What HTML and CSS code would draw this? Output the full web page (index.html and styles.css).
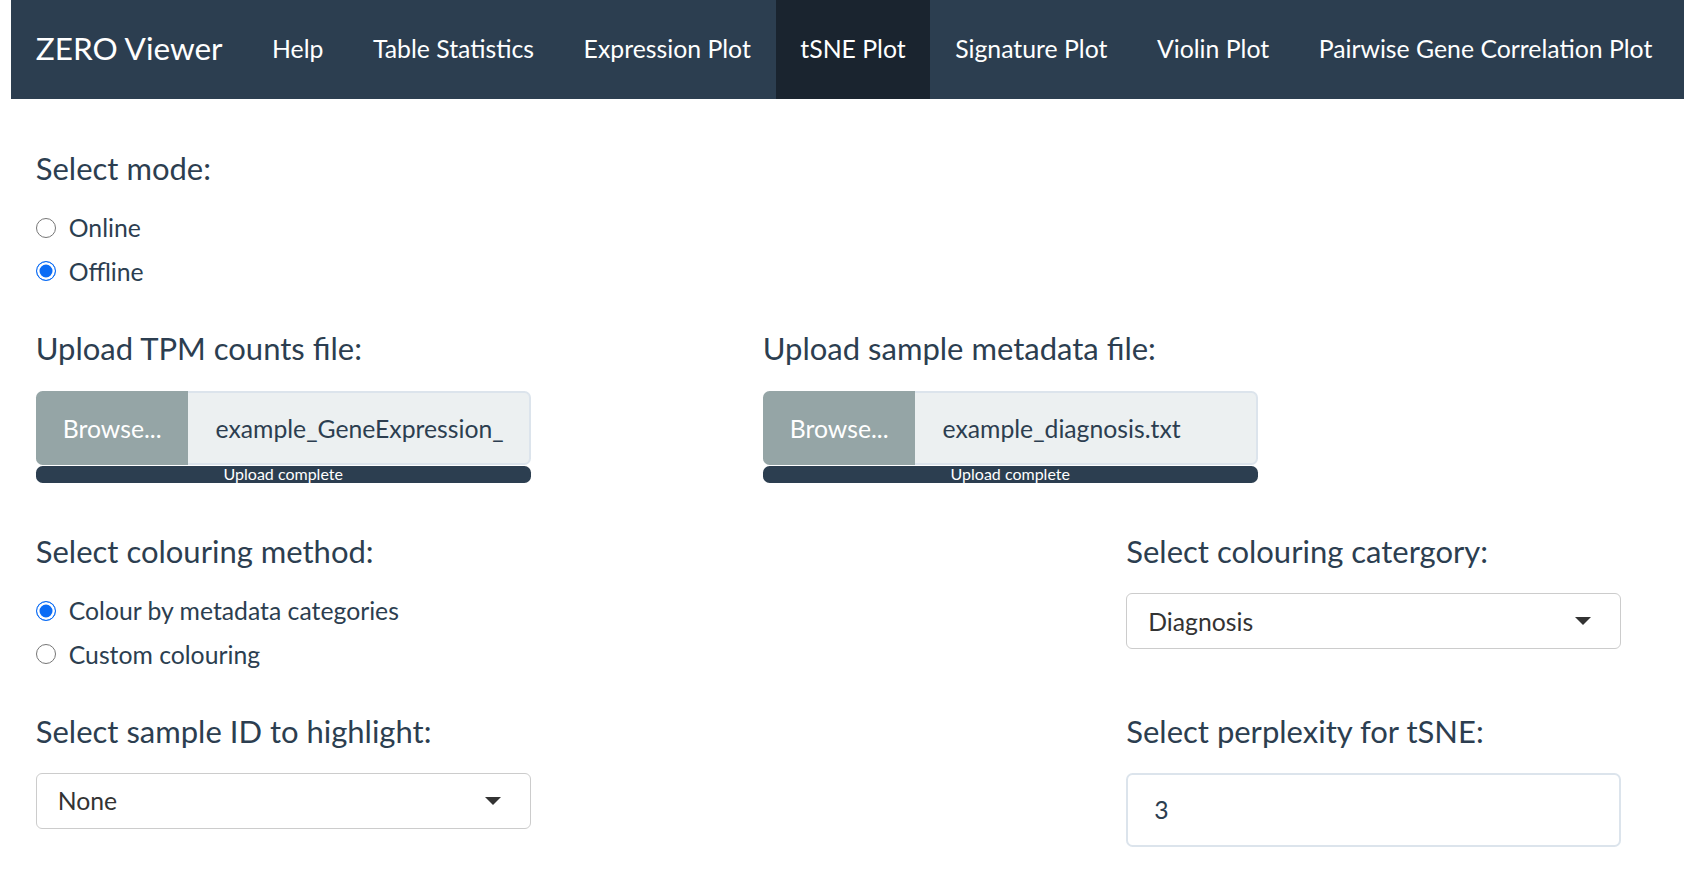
FILE: index.html
```html
<!DOCTYPE html>
<html lang="en">
<head>
<meta charset="utf-8">
<title>ZERO Viewer</title>
<link rel="stylesheet" href="styles.css">
</head>
<body>
<div class="page">
  <nav class="navbar">
    <span class="brand">ZERO Viewer</span>
    <ul class="nav">
      <li>Help</li>
      <li>Table Statistics</li>
      <li>Expression Plot</li>
      <li class="active">tSNE Plot</li>
      <li>Signature Plot</li>
      <li>Violin Plot</li>
      <li>Pairwise Gene Correlation Plot</li>
    </ul>
  </nav>

  <main class="content">
    <section class="field mode">
      <div class="label">Select mode:</div>
      <div class="radios">
        <label class="radio"><span class="dot"></span>Online</label>
        <label class="radio"><span class="dot checked"></span>Offline</label>
      </div>
    </section>

    <div class="row row-upload">
      <section class="field span2">
        <div class="label">Upload TPM counts file:</div>
        <div class="file-group">
          <span class="browse">Browse...</span>
          <span class="file-name">example_GeneExpression_</span>
        </div>
        <div class="progress">Upload complete</div>
      </section>
      <section class="field span2">
        <div class="label">Upload sample metadata file:</div>
        <div class="file-group">
          <span class="browse">Browse...</span>
          <span class="file-name">example_diagnosis.txt</span>
        </div>
        <div class="progress">Upload complete</div>
      </section>
    </div>

    <div class="row row-colour">
      <section class="field">
        <div class="label">Select colouring method:</div>
        <div class="radios">
          <label class="radio"><span class="dot checked"></span>Colour by metadata categories</label>
          <label class="radio"><span class="dot"></span>Custom colouring</label>
        </div>
      </section>
      <section class="field col4">
        <div class="label">Select colouring catergory:</div>
        <div class="select select-cat"><span>Diagnosis</span><span class="caret"></span></div>
      </section>
    </div>

    <div class="row row-sample">
      <section class="field">
        <div class="label">Select sample ID to highlight:</div>
        <div class="select select-id"><span>None</span><span class="caret"></span></div>
      </section>
      <section class="field col4">
        <div class="label">Select perplexity for tSNE:</div>
        <div class="number-input">3</div>
      </section>
    </div>
  </main>
</div>
</body>
</html>
```

FILE: styles.css
```css
* { box-sizing: border-box; }

html, body {
  margin: 0;
  padding: 0;
  background: #ffffff;
}

body {
  font-family: Lato, "Open Sans", "Liberation Sans", sans-serif;
  color: #2c3e50;
  overflow: hidden;
}

.page {
  margin-left: 11px;
}

/* ---------- navbar ---------- */
.navbar {
  display: flex;
  align-items: stretch;
  height: 99px;
  background: #2c3e50;
  color: #ffffff;
  white-space: nowrap;
}

.brand {
  display: flex;
  align-items: center;
  padding: 0 24.75px 4px 24.75px;
  font-size: 31.5px;
}

.nav {
  display: flex;
  margin: 0;
  padding: 0;
  list-style: none;
}

.nav li {
  display: flex;
  align-items: center;
  padding: 0 24.75px 3px 24.75px;
  font-size: 24.8px;
}

.nav li.active {
  background: #1a242f;
}

/* ---------- content ---------- */
.content {
  padding: 51.6px 24.75px 0 24.75px;
}

.label {
  font-size: 31px;
  line-height: 34.5px;
  white-space: nowrap;
  color: #2c3e50;
}

.radios {
  margin-top: 21px;
}

.radio {
  display: flex;
  align-items: center;
  height: 43.5px;
  font-size: 24.75px;
  color: #2c3e50;
  white-space: nowrap;
}

.dot {
  width: 20px;
  height: 20px;
  margin-right: 13px;
  border-radius: 50%;
  border: 1px solid #767676;
  background: #ffffff;
  flex: none;
}

.dot.checked {
  border: 1.5px solid #0b6cf5;
  background: #0b6cf5;
  box-shadow: inset 0 0 0 2.5px #ffffff;
}

.row {
  display: grid;
  grid-template-columns: repeat(4, 363.5px);
  align-items: start;
}

.span2 { grid-column: span 2; }
.col4 { grid-column: 4; }

.row-upload { margin-top: 38.4px; }
.row-colour { margin-top: 50.9px; }
.row-sample { margin-top: 38px; }

/* ---------- file input ---------- */
.file-group {
  display: flex;
  width: 495px;
  height: 74.25px;
  margin-top: 25px;
  font-size: 24.75px;
}

.browse {
  display: flex;
  align-items: center;
  padding: 0 27px;
  background: #95a5a6;
  color: #ffffff;
  border-radius: 6.6px 0 0 6.6px;
  flex: none;
}

.file-name {
  flex: 1;
  display: flex;
  align-items: center;
  padding: 0 26px 0 27px;
  background: #ecf0f1;
  border: 2px solid #dce4ec;
  border-left: 0;
  border-radius: 0 6.6px 6.6px 0;
  color: #2c3e50;
  white-space: nowrap;
  overflow: hidden;
}

.progress {
  width: 495px;
  height: 16.5px;
  margin-top: 1px;
  background: #2c3e50;
  border-radius: 6.6px;
  color: #ffffff;
  font-size: 16px;
  line-height: 16px;
  text-align: center;
  white-space: nowrap;
}

/* ---------- select ---------- */
.select {
  display: flex;
  align-items: center;
  justify-content: space-between;
  width: 495px;
  height: 56px;
  padding: 0 29px 0 21px;
  border: 1px solid #cccccc;
  border-radius: 6px;
  background: #ffffff;
  font-size: 24.75px;
  color: #333333;
}

.select-cat { margin-top: 25px; }
.select-id { margin-top: 24px; }

.caret {
  width: 0;
  height: 0;
  border-left: 8.5px solid transparent;
  border-right: 8.5px solid transparent;
  border-top: 8.5px solid #333333;
}

.number-input {
  display: flex;
  align-items: center;
  width: 495px;
  height: 74.25px;
  margin-top: 24px;
  padding: 0 26px;
  border: 2px solid #dce4ec;
  border-radius: 6.6px;
  background: #ffffff;
  font-size: 24.75px;
  color: #2c3e50;
}
```
